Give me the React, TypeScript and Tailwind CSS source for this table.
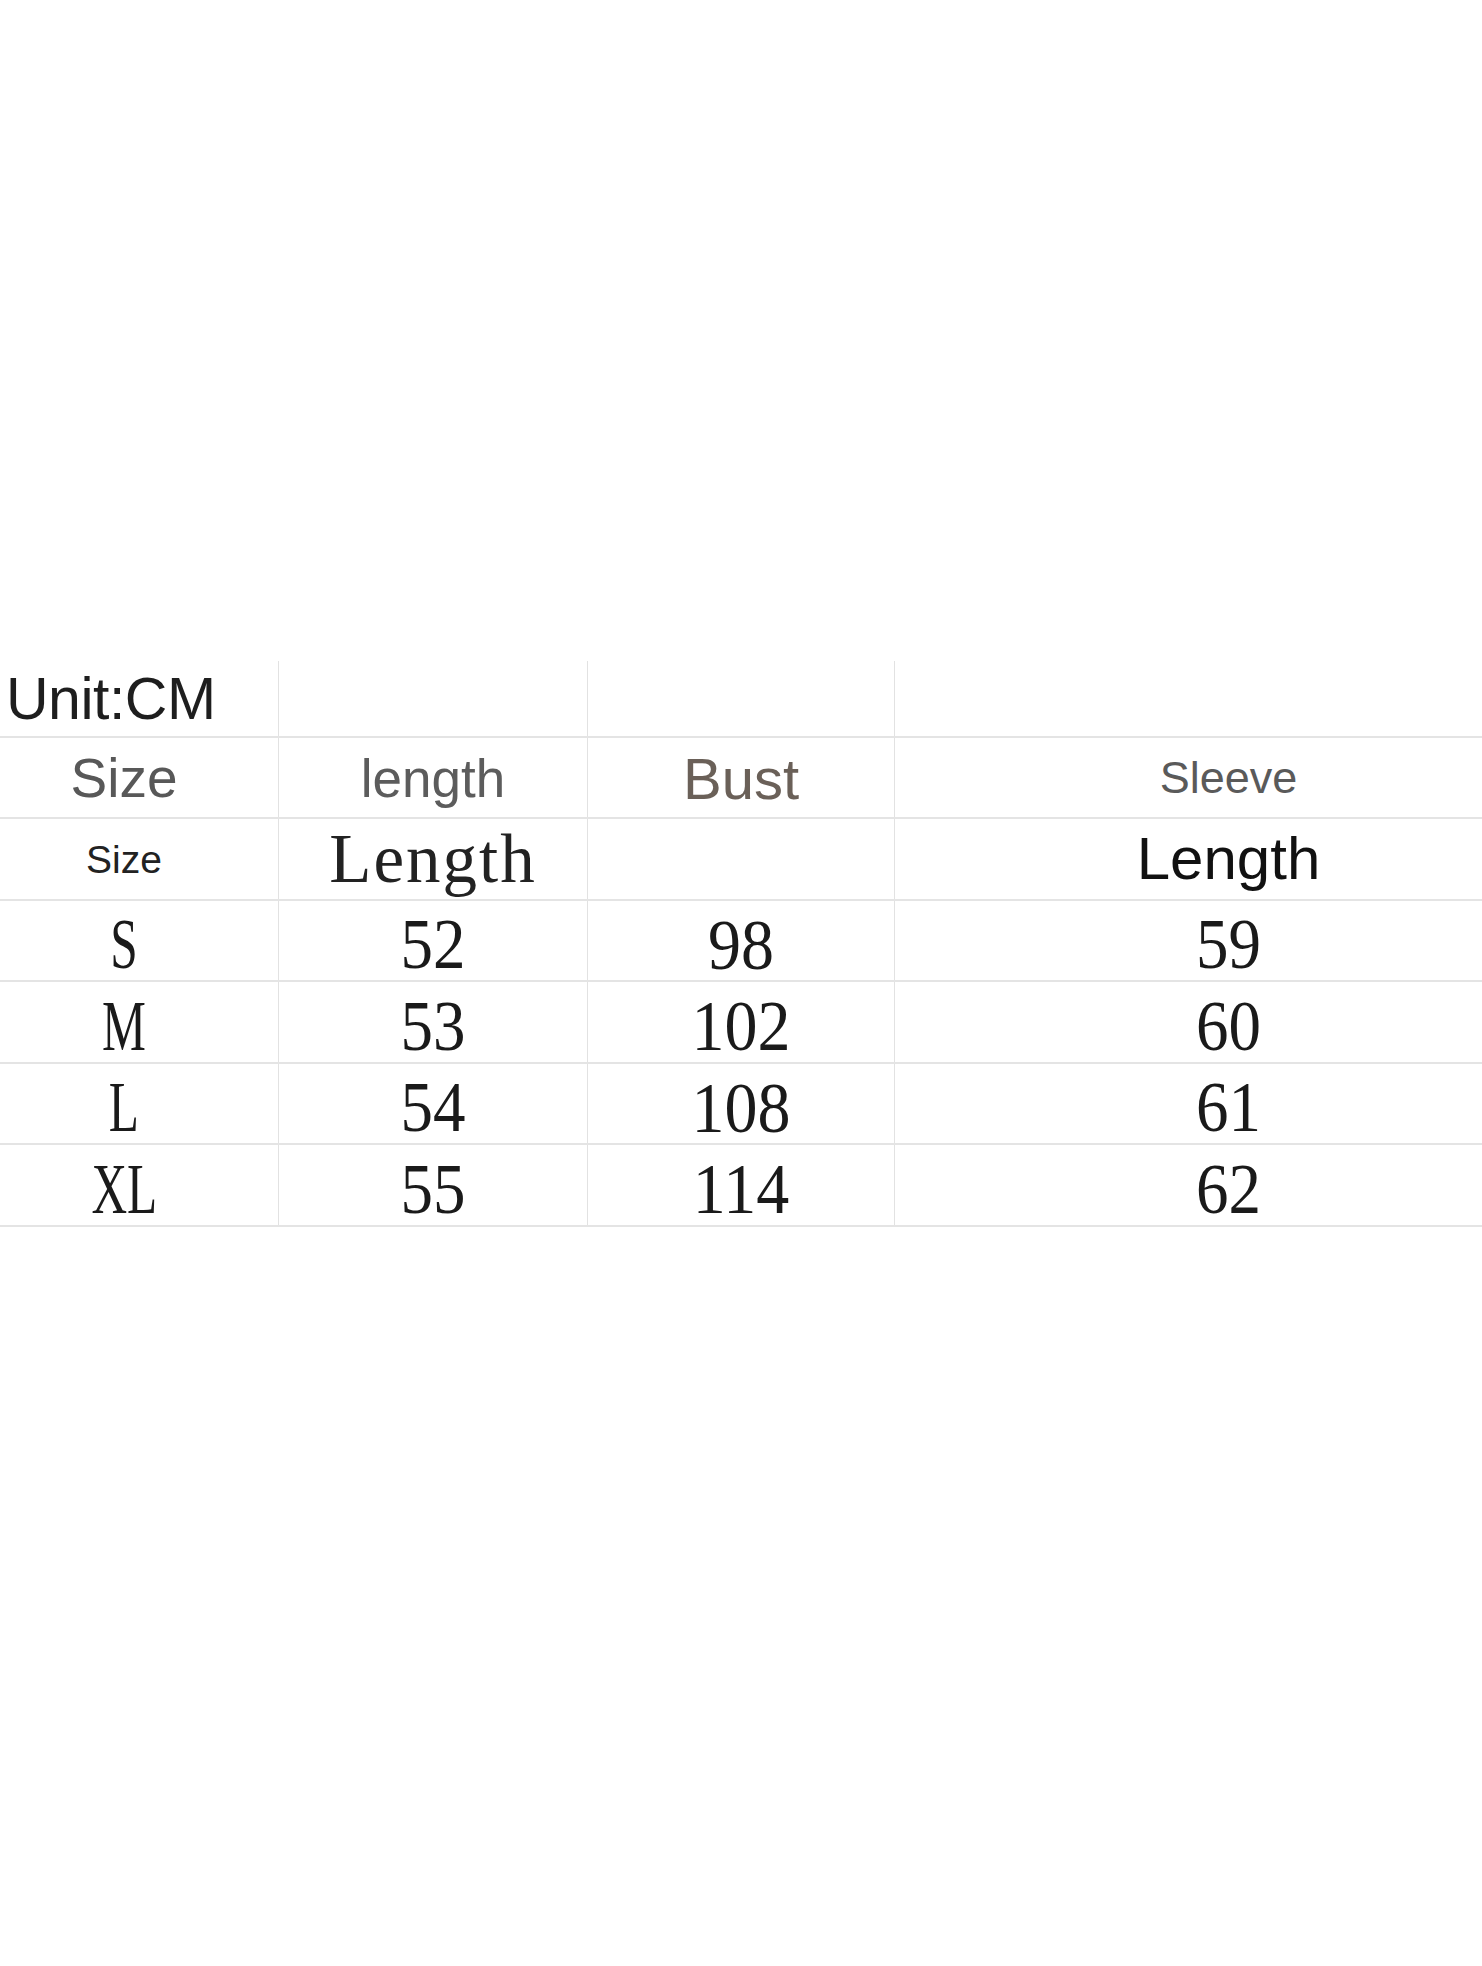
const ROWS = [
  { size: 'S', length: '52', bust: '98', sleeve: '59' },
  { size: 'M', length: '53', bust: '102', sleeve: '60' },
  { size: 'L', length: '54', bust: '108', sleeve: '61' },
  { size: 'XL', length: '55', bust: '114', sleeve: '62' },
]

const sans = "font-['Liberation_Sans',Arial,sans-serif]"
const serif = "font-['Liberation_Serif','Times_New_Roman',serif]"

function Row({ h, children }: { h: string; children: React.ReactNode }) {
  return (
    <div className={`grid grid-cols-[278px_309px_307px_1fr] border-b-2 border-[#e4e4e4] ${h}`}>
      {children}
    </div>
  )
}

function Cell({ first, className = '', children }: { first?: boolean; className?: string; children?: React.ReactNode }) {
  return (
    <div className={`flex items-center justify-center ${first ? '' : 'border-l border-[#e2e2e2]'} ${className}`}>
      {children}
    </div>
  )
}

export default function App() {
  return (
    <div className="min-h-[1966px] w-[1482px] bg-white pt-[661px] overflow-hidden">
      <div className="grid grid-cols-[278px_309px_307px_1fr] h-[77px] border-b-2 border-[#e4e4e4]">
        <div className="flex items-center pl-[6px] pt-[2px]">
          <span className={`${sans} text-[59px] leading-none text-[#1e1e1e] tracking-[-0.5px]`}>Unit:CM</span>
        </div>
        <Cell />
        <Cell />
        <Cell />
      </div>

      <Row h="h-[81px]">
        <Cell first className="pr-[30px] pt-[2px]">
          <span className={`${sans} text-[55px] leading-none text-[#585858]`}>Size</span>
        </Cell>
        <Cell>
          <span className={`${sans} text-[53px] leading-none text-[#5c5c5c] pt-[2px]`}>length</span>
        </Cell>
        <Cell className="pt-[2px]">
          <span className={`${sans} text-[58px] leading-none text-[#6a6058]`}>Bust</span>
        </Cell>
        <Cell className="pl-[80px]">
          <span className={`${sans} text-[45px] leading-none text-[#5a5a5a]`}>Sleeve</span>
        </Cell>
      </Row>

      <Row h="h-[82px]">
        <Cell first className="pr-[30px]">
          <span className={`${sans} text-[39px] leading-none text-[#222]`}>Size</span>
        </Cell>
        <Cell>
          <span className={`${serif} text-[69px] leading-none text-[#222] tracking-[2px]`}>Length</span>
        </Cell>
        <Cell />
        <Cell className="pl-[80px]">
          <span className={`${sans} text-[60px] leading-none text-[#111]`}>Length</span>
        </Cell>
      </Row>

      {ROWS.map((r, i) => (
        <Row key={r.size} h={i % 2 === 0 ? 'h-[81px]' : 'h-[82px]'}>
          <Cell first className="pr-[30px] pt-[8px]">
            <span className={`${serif} inline-block text-[65px] leading-none text-[#1a1a1a] scale-x-[0.76] scale-y-[1.1]`}>{r.size}</span>
          </Cell>
          <Cell className="pt-[8px]">
            <span className={`${serif} inline-block text-[65px] leading-none text-[#1a1a1a] scale-y-[1.1]`}>{r.length}</span>
          </Cell>
          <Cell className="pt-[8px]">
            <span className={`${serif} inline-block text-[66px] leading-none text-[#1a1a1a] scale-y-[1.1]`}>{r.bust}</span>
          </Cell>
          <Cell className="pl-[80px] pt-[8px]">
            <span className={`${serif} inline-block text-[65px] leading-none text-[#1a1a1a] scale-y-[1.1]`}>{r.sleeve}</span>
          </Cell>
        </Row>
      ))}
    </div>
  )
}
